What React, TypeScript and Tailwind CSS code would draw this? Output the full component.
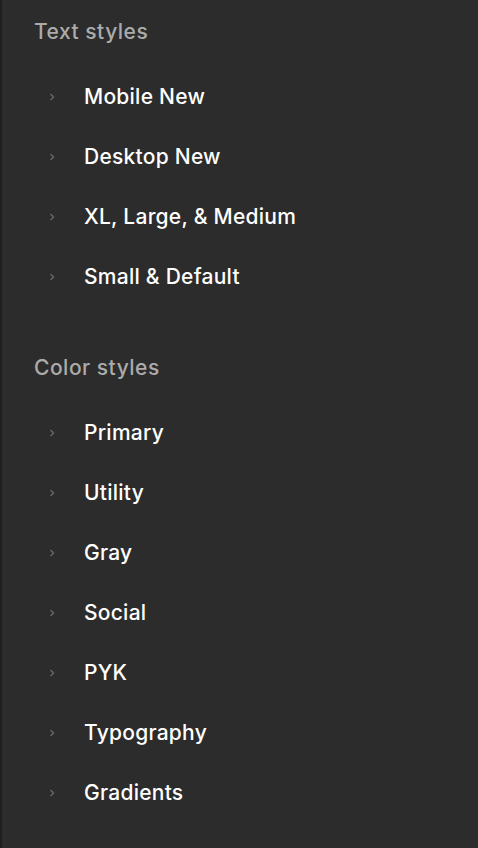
const sections = [
  { title: 'Text styles', items: ['Mobile New', 'Desktop New', 'XL, Large, & Medium', 'Small & Default'] },
  { title: 'Color styles', items: ['Primary', 'Utility', 'Gray', 'Social', 'PYK', 'Typography', 'Gradients'] },
]

function Chevron() {
  return (
    <svg width="8" height="10" viewBox="0 0 8 10" className="shrink-0">
      <path d="M2.5 2 L5.5 5 L2.5 8" fill="none" stroke="#646464" strokeWidth="1.5" />
    </svg>
  )
}

export default function App() {
  return (
    <div
      className="h-[848px] w-[478px] overflow-hidden border-l-2 border-[#1f1f1f] bg-[#2c2c2c] pt-[1px]"
      style={{ fontFamily: 'Inter, "Liberation Sans", sans-serif' }}
    >
      {sections.map((section, i) => (
        <div key={section.title} className={i > 0 ? 'mt-[30px]' : ''}>
          <div className="flex h-[62px] items-center pl-[32px] text-[21px] font-medium tracking-[0.5px] text-[#ababab]">
            {section.title}
          </div>
          <ul className="pt-[4px]">
            {section.items.map((item) => (
              <li key={item} className="flex h-[60px] items-center pl-[46px]">
                <Chevron />
                <span className="ml-[28px] text-[21px] font-medium tracking-[0.25px] text-white">{item}</span>
              </li>
            ))}
          </ul>
        </div>
      ))}
    </div>
  )
}
